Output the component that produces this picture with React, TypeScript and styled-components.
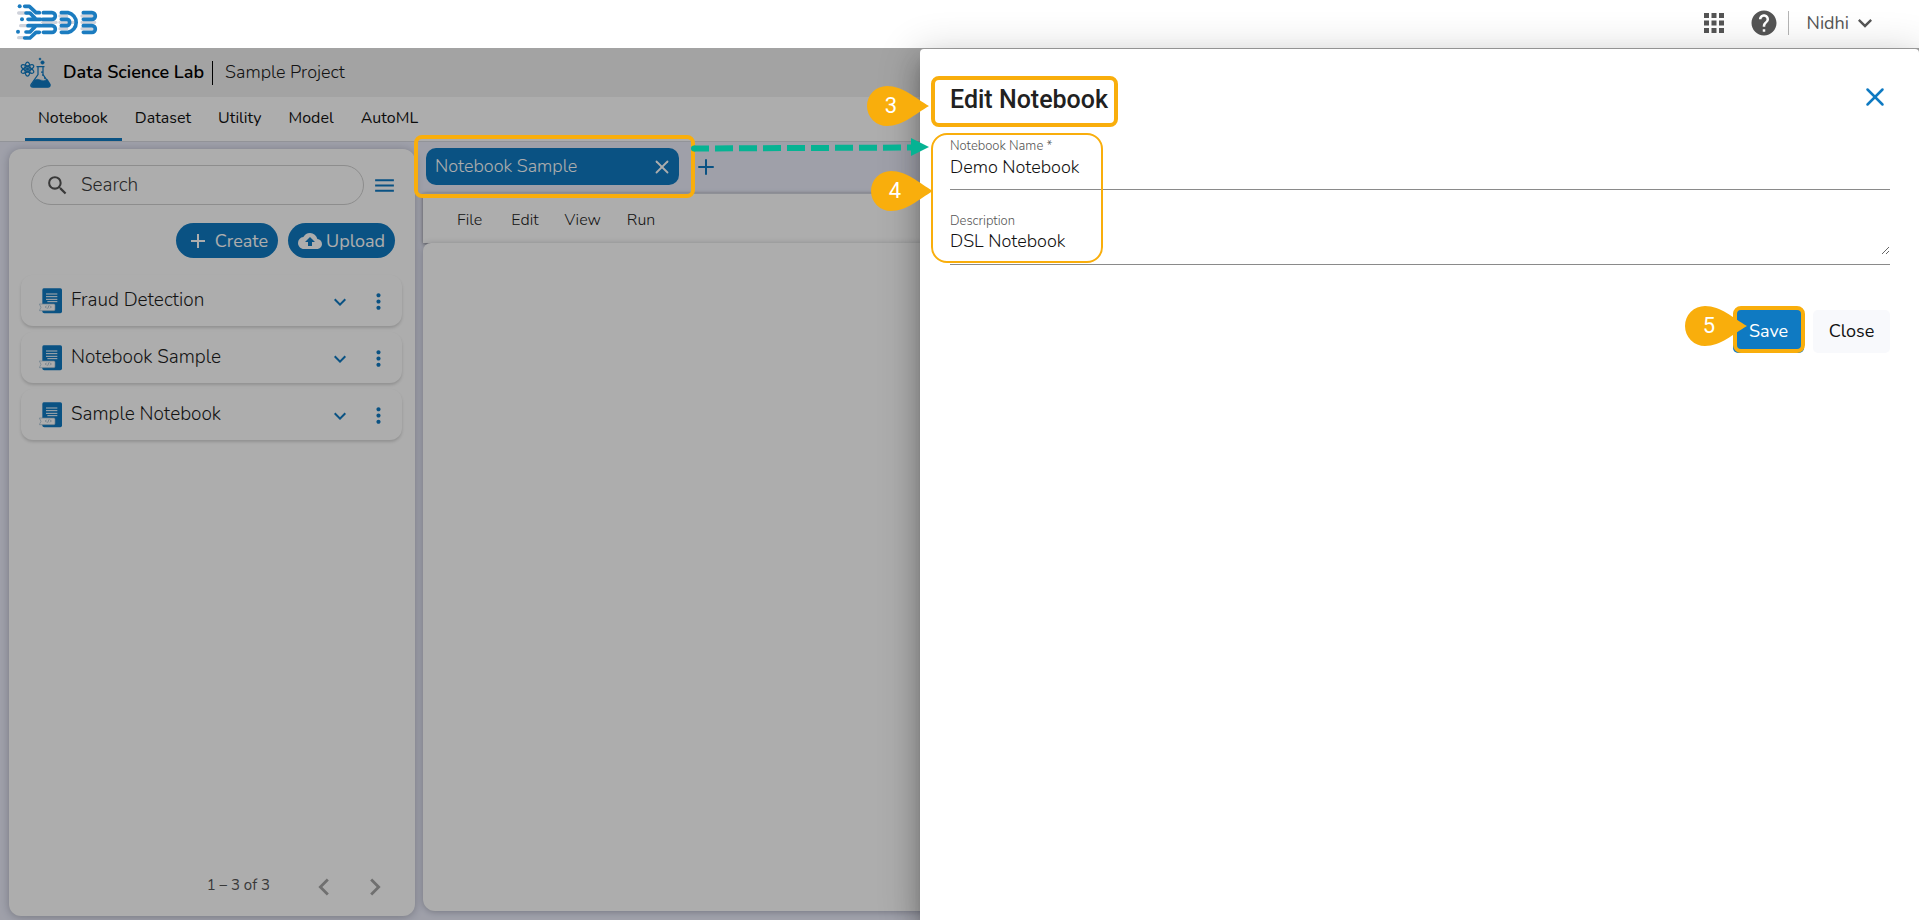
import React from "react";
import styled, { createGlobalStyle } from "styled-components";
import {
  MdAdd,
  MdApps,
  MdChevronLeft,
  MdChevronRight,
  MdCloudUpload,
  MdExpandMore,
  MdHelp,
  MdMenu,
  MdMoreVert,
  MdSearch,
} from "react-icons/md";
import { Plus, X } from "lucide-react";

const color = {
  blue: "#0f7ac2",
  orange: "#f9ae0c",
  green: "#06b393",
  lavender: "#eaecfa",
  grey: "#555555",
};

const GlobalStyle = createGlobalStyle`
  *, *::before, *::after { box-sizing: border-box; }
  body {
    margin: 0;
    font-family: "Nunito", "Open Sans", "Noto Sans", sans-serif;
    font-size: 18px;
    color: #1c1c1c;
    background: #ffffff;
  }
  button, input, textarea { font: inherit; color: inherit; }
  svg { display: block; flex: none; }
`;

const Page = styled.div`
  display: flex;
  flex-direction: column;
  min-height: 100vh;
  overflow: hidden;
`;

const TopBar = styled.header`
  display: flex;
  align-items: center;
  justify-content: space-between;
  height: 48px;
  padding: 0 40px 2px 16px;
`;

const TopActions = styled.div`
  display: flex;
  align-items: center;
  color: ${color.grey};
`;

const IconButton = styled.button<{ $size?: number; $color?: string }>`
  display: flex;
  align-items: center;
  justify-content: center;
  flex: none;
  width: ${(p) => p.$size ?? 24}px;
  height: ${(p) => p.$size ?? 24}px;
  padding: 0;
  border: 0;
  background: none;
  color: ${(p) => p.$color ?? color.blue};
`;

const ActionPair = styled.div`
  display: flex;
  gap: 20px;
  margin-right: 9px;
`;

const UserButton = styled.button`
  display: flex;
  align-items: center;
  gap: 2px;
  height: 24px;
  padding: 0 0 0 18px;
  border: 0;
  border-left: 1px solid #b5b5b5;
  background: none;
`;

const Stage = styled.div`
  position: relative;
  display: flex;
  flex-direction: column;
  flex: 1;
`;

const Shade = styled.div`
  position: absolute;
  inset: 0;
  z-index: 1;
  background: rgba(0, 0, 0, 0.32);
`;

const ProjectBar = styled.div`
  display: flex;
  align-items: center;
  height: 49px;
  padding: 0 20px;
  background: #f0f0f0;
`;

const ProductName = styled.h1`
  margin: 0 8px 0 12px;
  padding-bottom: 2px;
  font-size: 18px;
  font-weight: 600;
  color: #000000;
`;

const ProjectName = styled.span`
  padding: 0 0 2px 12px;
  border-left: 1px solid #000000;
  font-weight: 300;
  line-height: 22px;
`;

const TabNav = styled.nav`
  display: flex;
  height: 45px;
  padding: 0 25px;
  border-bottom: 1px solid #d8dae2;
  background: #ffffff;
`;

const NavLink = styled.a<{ $active?: boolean }>`
  display: flex;
  align-items: center;
  padding: 0 14px 0 13px;
  border-bottom: 3px solid ${(p) => (p.$active ? color.blue : "transparent")};
  color: #111111;
  font-size: 16px;
  text-decoration: none;
`;

const Workspace = styled.main`
  display: flex;
  flex: 1;
  gap: 8px;
  padding: 0 8px 0 9px;
  background: ${color.lavender};
`;

const Sidebar = styled.aside`
  display: flex;
  flex-direction: column;
  width: 406px;
  margin: 7px 0 4px;
  padding: 16px 13px 12px 12px;
  border-radius: 12px;
  background: #ffffff;
  box-shadow: 0 1px 8px rgba(40, 42, 60, 0.3);
`;

const SearchRow = styled.div`
  display: flex;
  align-items: center;
  gap: 8px;
  padding: 0 6px 0 10px;
`;

const SearchBox = styled.label`
  display: flex;
  align-items: center;
  flex: 1;
  gap: 11px;
  height: 40px;
  padding: 0 13px;
  border: 1px solid #d0d0d0;
  border-radius: 20px;
  color: ${color.grey};
`;

const SearchInput = styled.input`
  flex: 1;
  min-width: 0;
  padding: 0;
  border: 0;
  outline: 0;
  background: none;
  font-size: 19px;
  font-weight: 300;
  &::placeholder { color: #3c3c3c; opacity: 1; }
`;

const ButtonRow = styled.div`
  display: flex;
  justify-content: flex-end;
  gap: 10px;
  margin: 18px 7px 17px;
`;

const PillButton = styled.button<{ $gap: number }>`
  display: flex;
  align-items: center;
  justify-content: center;
  gap: ${(p) => p.$gap}px;
  height: 35px;
  padding: 0 10px;
  border: 0;
  border-radius: 18px;
  background: ${color.blue};
  color: #ffffff;
`;

const NotebookList = styled.ul`
  display: flex;
  flex-direction: column;
  gap: 6px;
  margin: 0;
  padding: 0;
  list-style: none;
`;

const NotebookRow = styled.li`
  display: flex;
  align-items: center;
  height: 51px;
  padding: 0 12px 0 18px;
  border-radius: 12px;
  background: #ffffff;
  box-shadow: 0 2px 3px rgba(0, 0, 0, 0.16);
`;

const NotebookName = styled.span`
  flex: 1;
  padding: 0 0 2px 9px;
  font-size: 19px;
  font-weight: 300;
`;

const RowActions = styled.div`
  display: flex;
  gap: 14px;
  padding-top: 2px;
`;

const Paginator = styled.footer`
  display: flex;
  align-items: center;
  justify-content: flex-end;
  gap: 17px;
  margin-top: auto;
  padding-right: 10px;
  color: ${color.grey};
  font-size: 15px;
`;

const PageCount = styled.span`
  padding: 0 20px 4px 0;
`;

const Editor = styled.section`
  display: flex;
  flex-direction: column;
  flex: 1;
`;

const EditorTabs = styled.div`
  display: flex;
  align-items: center;
  gap: 15px;
  height: 51px;
  padding: 0 0 2px 3px;
`;

const OpenTab = styled.div`
  position: relative;
  display: flex;
  align-items: center;
  justify-content: space-between;
  flex: none;
  width: 253px;
  height: 37px;
  padding: 0 5px 0 9px;
  border-radius: 10px;
  background: ${color.blue};
  color: #ffffff;
`;

const TabTitle = styled.span`
  padding-bottom: 2px;
  font-weight: 300;
`;

const MenuBar = styled.div`
  display: flex;
  align-items: center;
  height: 50px;
  padding: 3px 18px 0;
  border-top: 1px solid #d2d4de;
  background: #ffffff;
  box-shadow: 0 1px 4px rgba(0, 0, 0, 0.5);
`;

const MenuItem = styled.button<{ $wide?: boolean }>`
  padding: 0 ${(p) => (p.$wide ? 16 : 13)}px;
  border: 0;
  background: none;
  color: #222222;
  font-size: 16px;
  font-weight: 300;
`;

const Canvas = styled.div`
  flex: 1;
  margin-bottom: 9px;
  border-radius: 8px 8px 12px 12px;
  background: #ffffff;
  box-shadow: 0 1px 6px rgba(40, 42, 60, 0.3);
`;

const Drawer = styled.section`
  position: absolute;
  top: 1px;
  right: 0;
  bottom: 0;
  z-index: 3;
  width: round(52.05%, 1px);
  padding: 28px 29px 0 30px;
  border-radius: 4px 4px 0 0;
  background: #ffffff;
  box-shadow: 0 8px 10px -5px rgba(0, 0, 0, 0.2), 0 16px 24px 2px rgba(0, 0, 0, 0.2),
    0 6px 40px 5px rgba(0, 0, 0, 0.16);
`;

const DrawerHead = styled.div`
  display: flex;
  align-items: center;
  justify-content: space-between;
`;

const DrawerTitle = styled.h2`
  position: relative;
  margin: 0;
  padding-top: 7px;
  font-family: Roboto, sans-serif;
  font-size: 25px;
  font-weight: 500;
  line-height: 32px;
  color: #212121;
`;

const Form = styled.form`
  display: flex;
  flex-direction: column;
`;

const Fields = styled.div`
  position: relative;
  display: flex;
  flex-direction: column;
  gap: 23px;
  padding-top: 22px;
`;

const Field = styled.div`
  display: flex;
  flex-direction: column;
  height: 52px;
  border-bottom: 1px solid #8a8a8a;
`;

const FieldLabel = styled.label`
  color: #555555;
  font-size: 13px;
  font-weight: 300;
  line-height: 16px;
`;

const TextInput = styled.input`
  height: 26px;
  padding: 0;
  border: 0;
  outline: 0;
  background: none;
  color: #111111;
  font-weight: 300;
`;

const TextArea = styled.textarea`
  height: 26px;
  padding: 0;
  border: 0;
  outline: 0;
  overflow: hidden;
  background: none;
  color: #111111;
  font-weight: 300;
  line-height: 24px;
  resize: vertical;
`;

const FormActions = styled.div`
  display: flex;
  justify-content: flex-end;
  gap: 9px;
  padding-top: 45px;
`;

const FormButton = styled.button<{ $primary?: boolean }>`
  position: relative;
  height: 43px;
  padding: 0 0 2px;
  width: ${(p) => (p.$primary ? 71 : 77)}px;
  border: 0;
  border-radius: 5px;
  background: ${(p) => (p.$primary ? color.blue : "#f8f9fc")};
  color: ${(p) => (p.$primary ? "#ffffff" : "#111111")};
`;

const Ring = styled.span<{ $inset: string; $thin?: boolean }>`
  position: absolute;
  inset: ${(p) => p.$inset};
  z-index: 2;
  border: ${(p) => (p.$thin ? 2 : 4)}px solid ${color.orange};
  border-radius: ${(p) => (p.$thin ? 16 : 8)}px;
  pointer-events: none;
`;

const FieldsRing = styled(Ring)`
  right: auto;
  width: 172px;
`;

const PinBox = styled.span<{ $top: number; $left: number }>`
  position: absolute;
  top: ${(p) => p.$top}px;
  left: ${(p) => p.$left}px;
  z-index: 3;
  display: block;
  width: 62px;
  height: 40px;
  color: #ffffff;
  font: 400 22px/40px Roboto, sans-serif;
`;

const PinShape = styled.svg`
  position: absolute;
  inset: 0;
`;

const PinNumber = styled.span`
  position: relative;
  display: block;
  width: 48px;
  text-align: center;
`;

const ArrowShape = styled.svg`
  position: absolute;
  top: 89px;
  left: -229px;
`;

function Pin({ n, top, left }: { n: number; top: number; left: number }) {
  return (
    <PinBox $top={top} $left={left}>
      <PinShape width="62" height="40" viewBox="0 0 62 40" aria-hidden="true">
        <path d="M62 20C48 12 36 0 20 0a20 20 0 0 0 0 40c16 0 28-12 42-20z" fill={color.orange} />
      </PinShape>
      <PinNumber>{n}</PinNumber>
    </PinBox>
  );
}

function Arrow() {
  return (
    <ArrowShape width="238" height="20" viewBox="0 0 238 20" aria-hidden="true">
      <path d="M3 10.500L222 9.500" stroke={color.green} strokeWidth="6" strokeDasharray="18 6" strokeDashoffset="3" />
      <circle cx="3" cy="10.500" r="3" fill={color.green} />
      <path d="M220 0v18l18-9z" fill={color.green} />
    </ArrowShape>
  );
}

function Logo() {
  return (
    <svg width="82" height="38" viewBox="0 0 246 114" role="img" aria-label="BDB">
      <g fill="none" stroke="#cfd2da" strokeWidth="10" strokeLinecap="round">
        <path d="M8 27h24M14 65h26M8 101h24M80 55h40M132 55h40M198 55h38M132 36h20M132 74h20M198 36h34M198 74h34" />
      </g>
      <g fill="none" stroke="#1b7cc0" strokeWidth="11" strokeLinecap="round" strokeLinejoin="round">
        <path d="M26 7h14l20 19h10M30 27h12l18 19h14M36 46h22M36 65h22M30 84h12l18-19h14M26 102h16l18-17h10" />
        <path d="M82 26h26a10 10 0 0 1 0 20H80M80 65h28a10 10 0 0 1 0 20H82" />
        <path d="M136 26h20a30 30 0 0 1 0 59h-20M136 46h18a10 10 0 0 1 0 19h-18" />
        <path d="M202 26h26a10 10 0 0 1 0 20h-26M202 65h26a10 10 0 0 1 0 20h-26" />
      </g>
      <g fill="#1b7cc0">
        <circle cx="11" cy="7" r="6" />
        <circle cx="18" cy="46" r="6" />
        <circle cx="6" cy="83" r="6" />
      </g>
    </svg>
  );
}

function LabIcon() {
  return (
    <svg width="31" height="31" viewBox="0 0 62 62" fill="none" stroke={color.blue} aria-hidden="true">
      <g strokeWidth="2.500">
        <ellipse cx="15" cy="24" rx="5" ry="14" />
        <ellipse cx="15" cy="24" rx="5" ry="14" transform="rotate(60 15 24)" />
        <ellipse cx="15" cy="24" rx="5" ry="14" transform="rotate(120 15 24)" />
        <path d="M33 19h16M36 20v15L22 55q-2 5 4 5h30q5 0 4-5L46 35V20M42 30h4M44 36h4M48 42h4" />
      </g>
      <path d="M29 46q6-3 12 0t14-1l5 9q1 6-4 6H27q-6 0-4-5z" fill={color.blue} />
      <circle cx="15" cy="24" r="3" fill={color.blue} />
      <circle cx="40" cy="4" r="2" fill={color.blue} />
      <circle cx="45" cy="11" r="3.500" fill={color.blue} />
    </svg>
  );
}

function BookIcon() {
  return (
    <svg width="23" height="26" viewBox="0 0 69 78" aria-hidden="true">
      <path d="M14 1h50q5 0 5 5v64q0 6-5 6H16q-6 0-6-6V6q0-5 4-5z" fill={color.blue} />
      <path d="M21 18h34M21 26h34M21 34h34M25 41h30" stroke="#ffffff" strokeWidth="3" />
      <path d="M1 48h44q3 0 3 4v12q0 4-3 4H1l5-10z" fill="#ffffff" stroke="#9db9cd" strokeWidth="2" />
      <path d="M23 53l-4 4 4 4M33 53l4 4-4 4M30 52l-4 10" fill="none" stroke="#7f9fb7" strokeWidth="2" />
    </svg>
  );
}

const navItems = ["Notebook", "Dataset", "Utility", "Model", "AutoML"];
const notebooks = ["Fraud Detection", "Notebook Sample", "Sample Notebook"];
const menuItems = ["File", "Edit", "View", "Run"];

export default function App() {
  return (
    <Page>
      <GlobalStyle />
      <TopBar>
        <Logo />
        <TopActions>
          <ActionPair>
            <IconButton $size={30} $color={color.grey} aria-label="Apps"><MdApps size={30} /></IconButton>
            <IconButton $size={30} $color={color.grey} aria-label="Help"><MdHelp size={30} /></IconButton>
          </ActionPair>
          <UserButton>
            Nidhi
            <MdExpandMore size={28} />
          </UserButton>
        </TopActions>
      </TopBar>

      <Stage>
        <Shade />
        <ProjectBar>
          <LabIcon />
          <ProductName>Data Science Lab</ProductName>
          <ProjectName>Sample Project</ProjectName>
        </ProjectBar>
        <TabNav>
          {navItems.map((item, i) => (
            <NavLink key={item} href="#" $active={i === 0}>{item}</NavLink>
          ))}
        </TabNav>

        <Workspace>
          <Sidebar>
            <SearchRow>
              <SearchBox>
                <MdSearch size={25} />
                <SearchInput type="search" placeholder="Search" aria-label="Search" />
              </SearchBox>
              <IconButton $size={24} aria-label="List options"><MdMenu size={25} /></IconButton>
            </SearchRow>
            <ButtonRow>
              <PillButton $gap={5}><MdAdd size={24} />Create</PillButton>
              <PillButton $gap={4}><MdCloudUpload size={24} />Upload</PillButton>
            </ButtonRow>
            <NotebookList>
              {notebooks.map((name) => (
                <NotebookRow key={name}>
                  <BookIcon />
                  <NotebookName>{name}</NotebookName>
                  <RowActions>
                    <IconButton aria-label={`Expand ${name}`}><MdExpandMore size={24} /></IconButton>
                    <IconButton aria-label={`Actions for ${name}`}><MdMoreVert size={25} /></IconButton>
                  </RowActions>
                </NotebookRow>
              ))}
            </NotebookList>
            <Paginator>
              <PageCount>1 – 3 of 3</PageCount>
              <IconButton $size={34} $color="#a6a6a6" aria-label="Previous page"><MdChevronLeft size={34} /></IconButton>
              <IconButton $size={34} $color="#a6a6a6" aria-label="Next page"><MdChevronRight size={34} /></IconButton>
            </Paginator>
          </Sidebar>

          <Editor>
            <EditorTabs>
              <OpenTab>
                <TabTitle>Notebook Sample</TabTitle>
                <IconButton $color="#ffffff" aria-label="Close tab"><X size={22} strokeWidth={2} /></IconButton>
                <Ring $inset="-13px -16px -13px -12px" />
              </OpenTab>
              <IconButton aria-label="New tab"><Plus size={24} strokeWidth={2} /></IconButton>
            </EditorTabs>
            <MenuBar>
              {menuItems.map((item, i) => (
                <MenuItem key={item} $wide={i === 0}>{item}</MenuItem>
              ))}
            </MenuBar>
            <Canvas />
          </Editor>
        </Workspace>

        <Drawer aria-label="Edit Notebook">
          <DrawerHead>
            <DrawerTitle>
              Edit Notebook
              <Ring $inset="-1px -10px -11px -19px" />
            </DrawerTitle>
            <IconButton $size={30} aria-label="Close panel"><X size={30} strokeWidth={2} /></IconButton>
          </DrawerHead>
          <Form>
            <Fields>
              <Field>
                <FieldLabel htmlFor="notebook-name">Notebook Name *</FieldLabel>
                <TextInput id="notebook-name" defaultValue="Demo Notebook" />
              </Field>
              <Field>
                <FieldLabel htmlFor="description">Description</FieldLabel>
                <TextArea id="description" rows={1} defaultValue="DSL Notebook" />
              </Field>
              <FieldsRing $thin $inset="17px 0 2px -19px" />
            </Fields>
            <FormActions>
              <FormButton type="button" $primary>
                Save
                <Ring $inset="-4px -1px 0 0" />
                <Pin n={5} top={-4} left={-48} />
              </FormButton>
              <FormButton type="button">Close</FormButton>
            </FormActions>
          </Form>
          <Arrow />
          <Pin n={3} top={37} left={-53} />
          <Pin n={4} top={122} left={-49} />
        </Drawer>
      </Stage>
    </Page>
  );
}
